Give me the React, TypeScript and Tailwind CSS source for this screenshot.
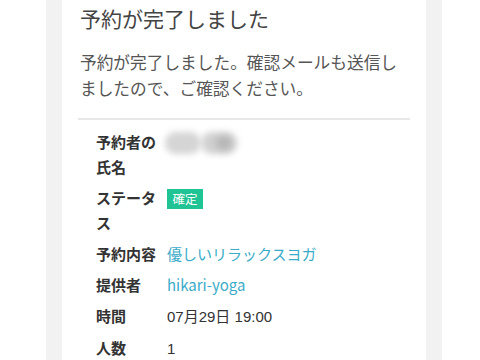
import * as React from "react"

const rows: { label: string; kind: "name" | "badge" | "link" | "text"; value?: string }[] = [
  { label: "予約者の氏名", kind: "name" },
  { label: "ステータス", kind: "badge", value: "確定" },
  { label: "予約内容", kind: "link", value: "優しいリラックスヨガ" },
  { label: "提供者", kind: "link", value: "hikari-yoga" },
  { label: "時間", kind: "text", value: "07月29日 19:00" },
  { label: "人数", kind: "text", value: "1" },
]

// the name is blurred out in the screenshot
function BlurredName() {
  return (
    <div className="-ml-[2px] flex h-[25px] items-center pt-[3px]">
      <span className="h-[22px] w-[36px] rounded-full bg-[#d5d5d5] blur-[3px]" />
      <span className="relative h-[22px] w-[36px] rounded-full bg-[#d2d2d2] blur-[3px]">
        <span className="absolute left-[15px] top-[4px] h-[14px] w-[16px] rounded-full bg-[#b0b0b0] blur-[3px]" />
      </span>
    </div>
  )
}

export default function App() {
  return (
    <div className="min-h-[360px] bg-white font-['Noto_Sans_CJK_JP','Noto_Sans',sans-serif]">
      <div className="ml-[46px] min-h-[360px] w-[396px] bg-[#f2f2f2] px-4">
        <div className="min-h-[360px] bg-white px-4 pb-6">
          <h1 className="pt-[3px] pl-[2px] text-[21px] leading-[30px] text-[#444]">
            予約が完了しました
          </h1>
          <p className="mt-4 pl-[2px] text-[16.7px] leading-[26px] text-[#555]">
            予約が完了しました。確認メールも送信しましたので、ご確認ください。
          </p>
          <div className="mt-[17px] border-t-2 border-[#e8e8e8]" />
          <div className="mt-[6px] pl-[18px]">
            {rows.map((row) => (
              <div key={row.label} className="flex py-[3px] text-[15px] leading-[25px]">
                <div className="w-[60px] shrink-0 font-semibold text-[#333]">{row.label}</div>
                <div className="ml-[11px] text-[#333]">
                  {row.kind === "name" && <BlurredName />}
                  {row.kind === "badge" && (
                    <span className="mt-[2px] inline-flex h-[20px] w-[36px] items-center justify-center bg-[#1fc394] text-[12.5px] leading-none text-white">
                      {row.value}
                    </span>
                  )}
                  {row.kind === "link" && <span className="text-[#3aabc9]">{row.value}</span>}
                  {row.kind === "text" && (
                    <span className="font-['Helvetica','Liberation_Sans','Noto_Sans_CJK_JP',sans-serif]">{row.value}</span>
                  )}
                </div>
              </div>
            ))}
          </div>
        </div>
      </div>
    </div>
  )
}
